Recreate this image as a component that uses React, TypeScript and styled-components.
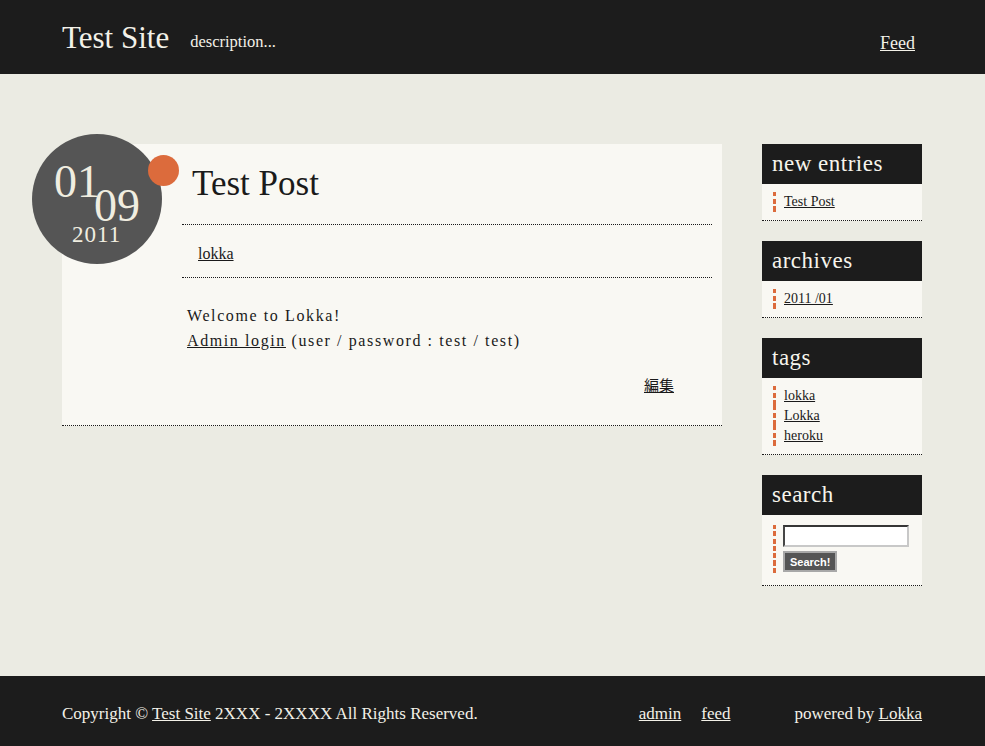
import React from "react";
import styled, { createGlobalStyle } from "styled-components";

const GlobalStyle = createGlobalStyle`
  html, body {
    margin: 0;
    padding: 0;
    background: #ebebe3;
    font-family: "Liberation Serif", "Noto Sans CJK JP", serif;
    color: #1a1a1a;
  }
  a {
    color: inherit;
  }
`;

const Page = styled.div`
  display: flex;
  flex-direction: column;
  min-height: 100vh;
`;

const Header = styled.header`
  background: #1c1c1c;
  height: 74px;
  display: flex;
  align-items: center;
  justify-content: space-between;
  padding: 0 70px 0 62px;
  color: #f3f1e8;
`;

const Brand = styled.div`
  display: flex;
  align-items: baseline;
  gap: 21px;
`;

const SiteTitle = styled.a`
  font-size: 31px;
  text-decoration: none;
  color: #f3f1e8;
  position: relative;
  top: 1px;
`;

const Description = styled.span`
  font-size: 16.5px;
`;

const HeaderLink = styled.a`
  font-size: 18px;
  color: #f3f1e8;
  position: relative;
  top: 6px;
`;

const Main = styled.main`
  flex: 1;
  display: flex;
  gap: 40px;
  padding: 70px 63px 40px 62px;
  align-items: flex-start;
`;

const Content = styled.div`
  flex: 1;
`;

const Post = styled.article`
  position: relative;
  background: #f9f8f3;
  border-bottom: 1px dotted #1a1a1a;
  padding: 0 10px 30px 120px;
`;

const DateBadge = styled.div`
  position: absolute;
  left: -30px;
  top: -10px;
  width: 130px;
  height: 130px;
  border-radius: 50%;
  background: #555555;
  color: #f0ede0;
`;

const DatePart = styled.span<{ $size: number; $x: number; $y: number }>`
  position: absolute;
  left: ${(p) => p.$x}px;
  top: ${(p) => p.$y}px;
  font-size: ${(p) => p.$size}px;
  line-height: 0.8;
  letter-spacing: ${(p) => (p.$size < 30 ? 1 : 0)}px;
`;

const Dot = styled.div`
  position: absolute;
  left: 116px;
  top: 21px;
  width: 31px;
  height: 31px;
  border-radius: 50%;
  background: #dc6b3c;
`;

const PostTitle = styled.h2`
  margin: 0;
  font-weight: normal;
  font-size: 35px;
  line-height: 40px;
  padding: 20px 10px 0;
  height: 60px;
  border-bottom: 1px dotted #1a1a1a;
`;

const Tags = styled.div`
  padding: 0 16px;
  height: 52px;
  display: flex;
  align-items: center;
  font-size: 16px;
  border-bottom: 1px dotted #1a1a1a;
  a {
    position: relative;
    top: 3px;
  }
`;

const Body = styled.div`
  padding: 25px 5px 0;
  font-size: 16px;
  letter-spacing: 1.6px;
  line-height: 25px;
  p {
    margin: 0;
  }
`;

const EditRow = styled.div`
  display: flex;
  justify-content: flex-end;
  padding: 21px 38px 0 0;
  font-size: 15px;
`;

const Sidebar = styled.aside`
  width: 160px;
  display: flex;
  flex-direction: column;
  gap: 20px;
`;

const Widget = styled.section`
  background: #f9f8f3;
  border-bottom: 1px dotted #1a1a1a;
`;

const WidgetTitle = styled.h3`
  margin: 0;
  background: #1c1c1c;
  color: #f6f4ec;
  font-weight: normal;
  font-size: 23px;
  letter-spacing: 0.5px;
  height: 40px;
  line-height: 40px;
  padding: 0 10px;
`;

const WidgetList = styled.ul`
  list-style: none;
  margin: 0;
  padding: 8px 10px 8px 11px;
`;

const Marker = `
  border-left: 3px solid transparent;
  border-image: repeating-linear-gradient(to bottom, #dc6b3c 0 5px, transparent 5px 7px) 1;
`;

const WidgetItem = styled.li`
  ${Marker}
  padding-left: 8px;
  font-size: 14px;
  line-height: 20px;
`;

const SearchForm = styled.form`
  ${Marker}
  margin: 10px 10px 10px 11px;
  padding: 0 0 3px 7px;
  display: flex;
  flex-direction: column;
  align-items: flex-start;
  gap: 4px;
`;

const SearchInput = styled.input`
  box-sizing: border-box;
  width: 126px;
  height: 22px;
  border: 2px inset #c8c8c8;
  border-top-color: #8a8a8a;
  border-left-color: #9a9a9a;
  background: #fff;
  padding: 1px 2px;
  margin: 0;
`;

const SearchButton = styled.button`
  background: #555555;
  color: #fff;
  border: 2px solid #a8a8a8;
  font-family: "Liberation Sans", sans-serif;
  font-weight: bold;
  font-size: 11px;
  height: 21px;
  padding: 0 5px;
  margin: 0;
`;

const Footer = styled.footer`
  box-sizing: border-box;
  background: #1c1c1c;
  color: #f3f1e8;
  height: 70px;
  display: flex;
  align-items: center;
  padding: 5px 63px 0 62px;
  font-size: 17px;
  a {
    color: #f3f1e8;
  }
`;

const Copyright = styled.div`
  flex: 1;
`;

const FooterLinks = styled.div`
  display: flex;
  gap: 20px;
  margin-right: 64px;
`;

const App = () => {
  return (
    <Page>
      <GlobalStyle />
      <Header>
        <Brand>
          <SiteTitle href="#">Test Site</SiteTitle>
          <Description>description...</Description>
        </Brand>
        <HeaderLink href="#">Feed</HeaderLink>
      </Header>
      <Main>
        <Content>
          <Post>
            <DateBadge>
              <DatePart $size={46} $x={22} $y={30}>01</DatePart>
              <DatePart $size={46} $x={62} $y={54}>09</DatePart>
              <DatePart $size={23} $x={40} $y={92}>2011</DatePart>
              <Dot />
            </DateBadge>
            <PostTitle>Test Post</PostTitle>
            <Tags>
              <a href="#">lokka</a>
            </Tags>
            <Body>
              <p>Welcome to Lokka!</p>
              <p>
                <a href="#">Admin login</a> (user / password : test / test)
              </p>
            </Body>
            <EditRow>
              <a href="#">編集</a>
            </EditRow>
          </Post>
        </Content>
        <Sidebar>
          <Widget>
            <WidgetTitle>new entries</WidgetTitle>
            <WidgetList>
              <WidgetItem><a href="#">Test Post</a></WidgetItem>
            </WidgetList>
          </Widget>
          <Widget>
            <WidgetTitle>archives</WidgetTitle>
            <WidgetList>
              <WidgetItem><a href="#">2011 /01</a></WidgetItem>
            </WidgetList>
          </Widget>
          <Widget>
            <WidgetTitle>tags</WidgetTitle>
            <WidgetList>
              <WidgetItem><a href="#">lokka</a></WidgetItem>
              <WidgetItem><a href="#">Lokka</a></WidgetItem>
              <WidgetItem><a href="#">heroku</a></WidgetItem>
            </WidgetList>
          </Widget>
          <Widget>
            <WidgetTitle>search</WidgetTitle>
            <SearchForm onSubmit={(e) => e.preventDefault()}>
              <SearchInput type="text" />
              <SearchButton type="submit">Search!</SearchButton>
            </SearchForm>
          </Widget>
        </Sidebar>
      </Main>
      <Footer>
        <Copyright>
          Copyright © <a href="#">Test Site</a> 2XXX - 2XXXX All Rights Reserved.
        </Copyright>
        <FooterLinks>
          <a href="#">admin</a>
          <a href="#">feed</a>
        </FooterLinks>
        <div>
          powered by <a href="#">Lokka</a>
        </div>
      </Footer>
    </Page>
  );
};

export default App;
